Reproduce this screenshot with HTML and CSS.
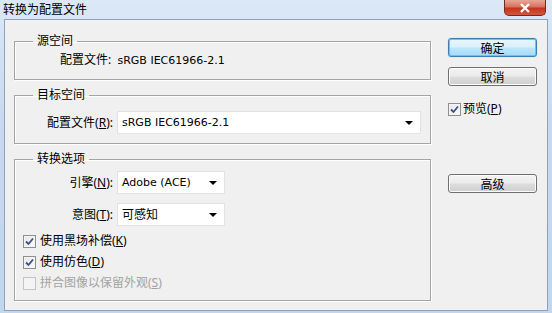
FILE: index.html
```html
<!DOCTYPE html>
<html>
<head>
  <title>转换为配置文件</title>
  <link rel="stylesheet" href="styles.css">
</head>
<body>
  <div class="window">
    <div class="titlebar">
      <span class="title">转换为配置文件</span>
      <div class="close-btn">
        <svg width="12" height="10" viewBox="0 0 12 10"><path d="M2 1 L10 9 M10 1 L2 9" stroke="#fff" stroke-width="2.4"/></svg>
      </div>
    </div>

    <div class="client">
      <div class="left-col">
        <fieldset class="group group-source">
          <legend>源空间</legend>
          <div class="info-row">配置文件:&nbsp; <span class="latin">sRGB IEC61966-2.1</span></div>
        </fieldset>

        <fieldset class="group group-target">
          <legend>目标空间</legend>
          <div class="field-row">
            <label class="field-label">配置文件(<u>R</u>):</label>
            <div class="select wide"><span class="latin">sRGB IEC61966-2.1</span><i class="arrow"></i></div>
          </div>
        </fieldset>

        <fieldset class="group group-options">
          <legend>转换选项</legend>
          <div class="field-row">
            <label class="field-label">引擎(<u>N</u>):</label>
            <div class="select narrow"><span class="latin">Adobe (ACE)</span><i class="arrow"></i></div>
          </div>
          <div class="field-row second">
            <label class="field-label">意图(<u>T</u>):</label>
            <div class="select narrow"><span>可感知</span><i class="arrow"></i></div>
          </div>
          <div class="checks">
            <div class="check-row">
              <span class="checkbox checked"><svg width="9" height="9" viewBox="0 0 9 9"><path d="M1 4.5 L3.5 7 L8 1.5" fill="none" stroke="#3b4f8a" stroke-width="1.8"/></svg></span>
              <span>使用黑场补偿(<u>K</u>)</span>
            </div>
            <div class="check-row">
              <span class="checkbox checked"><svg width="9" height="9" viewBox="0 0 9 9"><path d="M1 4.5 L3.5 7 L8 1.5" fill="none" stroke="#3b4f8a" stroke-width="1.8"/></svg></span>
              <span>使用仿色(<u>D</u>)</span>
            </div>
            <div class="check-row disabled">
              <span class="checkbox"></span>
              <span>拼合图像以保留外观(<u>S</u>)</span>
            </div>
          </div>
        </fieldset>
      </div>

      <div class="right-col">
        <button class="btn default">确定</button>
        <button class="btn">取消</button>
        <div class="check-row preview">
          <span class="checkbox checked"><svg width="9" height="9" viewBox="0 0 9 9"><path d="M1 4.5 L3.5 7 L8 1.5" fill="none" stroke="#3b4f8a" stroke-width="1.8"/></svg></span>
          <span>预览(<u>P</u>)</span>
        </div>
        <button class="btn advanced">高级</button>
      </div>
    </div>
  </div>
</body>
</html>
```

FILE: styles.css
```css
* {
  margin: 0;
  padding: 0;
  box-sizing: border-box;
}

body {
  width: 552px;
  height: 313px;
  overflow: hidden;
  font-family: "Noto Sans", "Noto Sans CJK SC", sans-serif;
  font-size: 12px;
  line-height: 16px;
  color: #000;
  background: #c9dbef;
}

.window {
  width: 552px;
  height: 313px;
  background: linear-gradient(180deg, #dbe8f6 0%, #c6d9ee 40%, #c2d6ed 100%);
  display: flex;
  flex-direction: column;
}

.titlebar {
  height: 22px;
  display: flex;
  justify-content: space-between;
  align-items: flex-start;
  padding-left: 3px;
}

.title {
  margin-top: 2px;
  color: #000;
}

.close-btn {
  width: 42px;
  height: 16px;
  margin-right: 6px;
  border: 1px solid #6d2b22;
  border-top: none;
  border-radius: 0 0 5px 5px;
  background: linear-gradient(180deg, #e9a597 0%, #d6735f 45%, #c2351c 55%, #d6553a 100%);
  display: flex;
  align-items: center;
  justify-content: center;
}

.client {
  flex: 1;
  margin: 0 4px 2px 4px;
  border: 1px solid #8ca2bd;
  background: #f0f0f0;
  display: flex;
  padding: 13px 0 0 9px;
  gap: 17px;
}

.left-col {
  width: 417px;
  display: flex;
  flex-direction: column;
  gap: 7px;
  padding-bottom: 9px;
}

.group {
  border: 1px solid #a4a4a4;
  box-shadow: inset 1px 1px 0 #fff, 1px 1px 0 #fff;
  padding: 0;
}

.group legend {
  margin-left: 18px;
  padding: 0 4px;
  line-height: 16px;
}

.latin {
  font-family: "DejaVu Sans", "Liberation Sans", sans-serif;
  font-size: 11px;
}

.group-source {
  padding: 3px 0 10px 0;
}

.info-row {
  padding-left: 45px;
}

.group-target {
  padding: 8px 0 9px 0;
}

.field-row {
  display: flex;
  align-items: center;
}

.field-label {
  width: 102px;
  text-align: right;
  padding-right: 4px;
}

.select {
  height: 23px;
  background: #fff;
  border: 1px solid #e2e2e2;
  display: flex;
  align-items: center;
  justify-content: space-between;
  padding: 0 7px 0 4px;
}

.select.wide {
  width: 304px;
}

.select.narrow {
  width: 108px;
}

.arrow {
  width: 0;
  height: 0;
  border-left: 4px solid transparent;
  border-right: 4px solid transparent;
  border-top: 4px solid #000;
}

.group-options {
  padding: 4px 0 9px 0;
  flex: 1;
}

.group-options .field-row.second {
  margin-top: 9px;
}

.checks {
  margin-top: 7px;
  padding-left: 8px;
  display: flex;
  flex-direction: column;
  gap: 5px;
}

.check-row {
  display: flex;
  align-items: center;
  gap: 4px;
  line-height: 16px;
}

.check-row.disabled {
  color: #a3a3a3;
}

.checkbox {
  width: 13px;
  height: 13px;
  border: 1px solid #8e8f8f;
  background: linear-gradient(135deg, #e6e6e6 0%, #fbfbfb 100%);
  box-shadow: inset 0 0 0 1px #f4f4f4;
  display: flex;
  align-items: center;
  justify-content: center;
}

.check-row.disabled .checkbox {
  border-color: #c4c4c4;
  background: #f4f4f4;
}

.right-col {
  width: 89px;
  display: flex;
  flex-direction: column;
  padding-top: 5px;
}

.btn {
  height: 19px;
  width: 89px;
  font-family: "Noto Sans CJK SC", sans-serif;
  font-size: 12px;
  line-height: 15px;
  border: 1px solid #707070;
  border-radius: 3px;
  background: linear-gradient(180deg, #f3f3f3 0%, #ebebeb 48%, #dddddd 52%, #cfcfcf 100%);
  box-shadow: inset 0 0 0 1px #fcfcfc;
  color: #000;
}

.btn + .btn {
  margin-top: 10px;
}

.btn.default {
  border-color: #3c7fb1;
  box-shadow: inset 0 0 0 1px #48d4f5, 0 0 1px #6cc3e6;
  background: linear-gradient(180deg, #eaf6fd 0%, #d9f0fc 48%, #bee6fd 52%, #a7d9f5 100%);
}

.preview {
  margin-top: 15px;
  gap: 2px;
}

.btn.advanced {
  margin-top: 57px;
}
```
